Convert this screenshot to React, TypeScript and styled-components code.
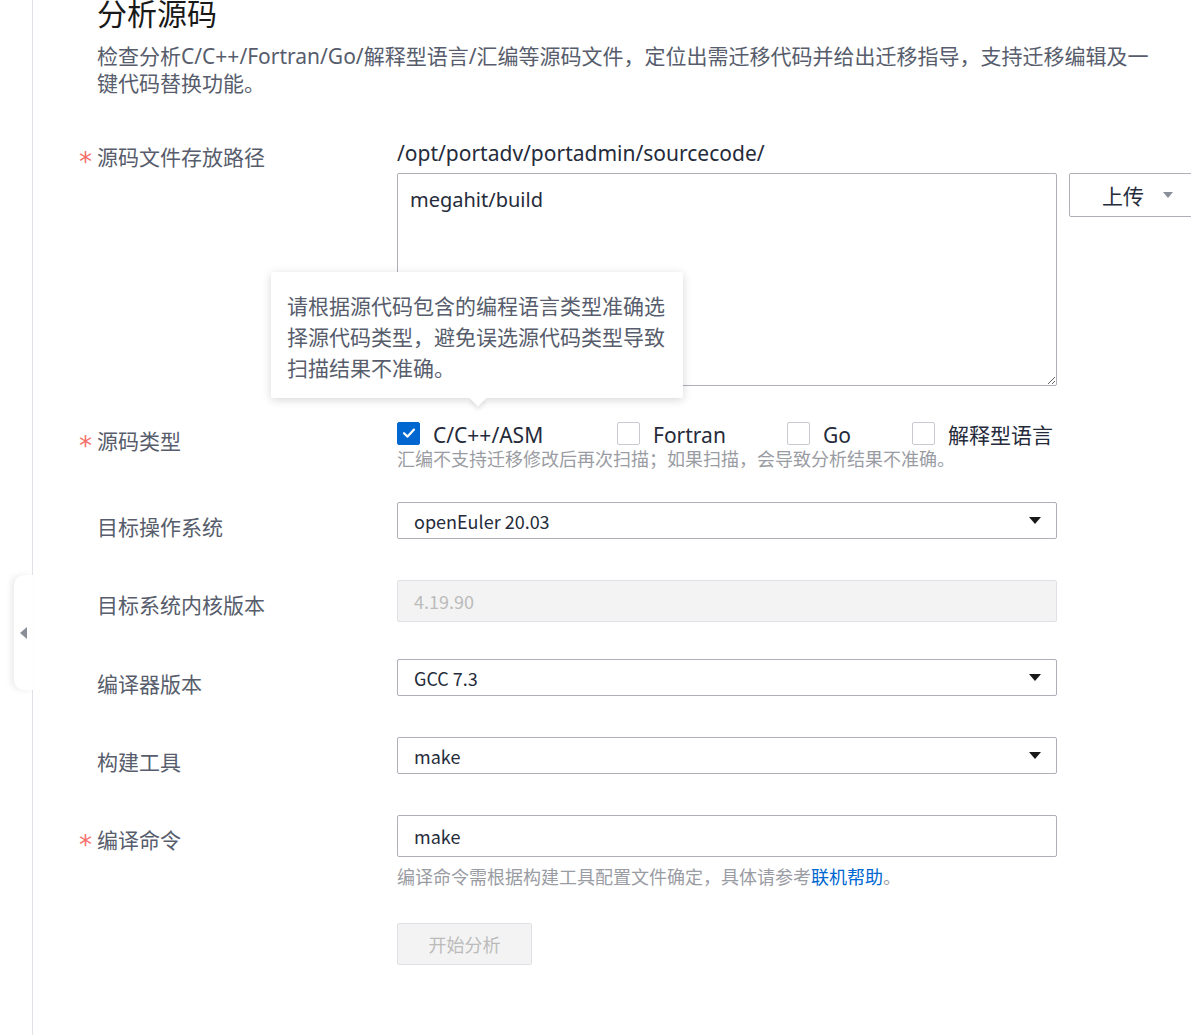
import styled, { createGlobalStyle } from "styled-components";

const GlobalStyle = createGlobalStyle`
  html, body {
    margin: 0;
    padding: 0;
    overflow: hidden;
    background: #ffffff;
  }
  body {
    font-family: "Noto Sans", "Noto Sans CJK SC", sans-serif;
    color: #252b3a;
  }
  * {
    box-sizing: border-box;
  }
`;

const cjk = `"Noto Sans CJK SC", "Noto Sans", sans-serif`;

const Page = styled.div`
  display: flex;
  min-height: 100vh;
  width: 100%;
`;

const Sidebar = styled.div`
  position: relative;
  flex: 0 0 33px;
  border-right: 1px solid #dfe1e6;
`;

const CollapseTab = styled.div`
  position: absolute;
  top: 575px;
  left: 14px;
  width: 19px;
  height: 115px;
  background: #ffffff;
  border-radius: 10px 0 0 10px;
  box-shadow: -3px 0 6px rgba(0, 0, 0, 0.08);
  display: flex;
  align-items: center;
  padding-left: 6px;
`;

const CollapseArrow = styled.span`
  width: 0;
  height: 0;
  border-top: 6px solid transparent;
  border-bottom: 6px solid transparent;
  border-right: 7px solid #8a8e99;
`;

const Main = styled.div`
  flex: 1;
  padding-left: 64px;
  min-width: 0;
`;

const Title = styled.h1`
  margin: -8px 0 0;
  font-family: ${cjk};
  font-size: 30px;
  line-height: 40px;
  font-weight: 400;
  color: #191919;
`;

const Description = styled.p`
  margin: 11px 0 0;
  width: 1062px;
  font-size: 21px;
  line-height: 27px;
  color: #575d6c;
`;

const Form = styled.div`
  margin-top: 42px;
  margin-left: -18px;
  display: flex;
  flex-direction: column;
`;

const Row = styled.div<{ $gap: number }>`
  display: flex;
  align-items: flex-start;
  margin-top: ${(p) => p.$gap}px;
`;

const LabelCell = styled.div<{ $pt: number }>`
  flex: 0 0 318px;
  display: flex;
  padding-top: ${(p) => p.$pt}px;
  font-family: ${cjk};
  font-size: 21px;
  line-height: 24px;
  color: #575d6c;
`;

const Star = styled.span<{ $show: boolean }>`
  flex: 0 0 18px;
  height: 24px;
  font-family: "DejaVu Sans", sans-serif;
  font-size: 26px;
  line-height: 24px;
  padding-top: 6px;
  color: #f66f6a;
  visibility: ${(p) => (p.$show ? "visible" : "hidden")};
`;

const Control = styled.div`
  position: relative;
  display: flex;
  flex-direction: column;
`;

const PathText = styled.div`
  font-size: 21px;
  line-height: 28px;
  color: #252b3a;
`;

const UploadLine = styled.div`
  display: flex;
  align-items: flex-start;
  gap: 12px;
  margin-top: 6px;
`;

const TextArea = styled.textarea`
  width: 660px;
  height: 213px;
  resize: vertical;
  border: 1px solid #adb0b8;
  border-radius: 2px;
  padding: 11px 12px;
  font-family: "Noto Sans", "Noto Sans CJK SC", sans-serif;
  font-size: 20px;
  line-height: 30px;
  color: #252b3a;
  outline: none;
`;

const UploadButton = styled.button`
  flex: 0 0 140px;
  height: 44px;
  border: 1px solid #adb0b8;
  border-radius: 2px;
  background: #ffffff;
  display: flex;
  align-items: center;
  padding-left: 32px;
  gap: 19px;
  font-family: ${cjk};
  font-size: 21px;
  color: #252b3a;
`;

const SmallCaret = styled.span`
  width: 0;
  height: 0;
  border-left: 5px solid transparent;
  border-right: 5px solid transparent;
  border-top: 6px solid #8a8e99;
`;

const Tooltip = styled.div`
  position: absolute;
  left: -126px;
  bottom: calc(100% + 23px);
  width: 412px;
  padding: 18px 16px 15px;
  background: #ffffff;
  border-radius: 2px;
  box-shadow: 0 2px 10px rgba(0, 0, 0, 0.16);
  font-family: ${cjk};
  font-size: 21px;
  line-height: 31px;
  color: #575d6c;
  &::after {
    content: "";
    position: absolute;
    left: 201px;
    bottom: -6px;
    width: 12px;
    height: 12px;
    background: #ffffff;
    transform: rotate(45deg);
    box-shadow: 3px 3px 4px rgba(0, 0, 0, 0.08);
  }
`;

const CheckGroup = styled.div`
  display: grid;
  grid-template-columns: 220px 170px 125px auto;
  align-items: center;
  height: 24px;
`;

const CheckItem = styled.label`
  display: flex;
  align-items: center;
  gap: 13px;
  font-size: 21px;
  line-height: 24px;
  color: #252b3a;
`;

const CheckText = styled.span`
  position: relative;
  top: 2px;
`;

const Box = styled.span<{ $checked: boolean }>`
  flex: 0 0 23px;
  width: 23px;
  height: 23px;
  border-radius: 2px;
  border: 1px solid ${(p) => (p.$checked ? "#0067d1" : "#c8cad0")};
  background: ${(p) => (p.$checked ? "#0067d1" : "#ffffff")};
  display: flex;
  align-items: center;
  justify-content: center;
`;

const Hint = styled.div<{ $mt: number }>`
  margin-top: ${(p) => p.$mt}px;
  font-family: ${cjk};
  font-size: 18px;
  line-height: 22px;
  color: #9a9ca3;
`;

const Link = styled.a`
  color: #0067d1;
  text-decoration: none;
`;

const Select = styled.div`
  width: 660px;
  height: 37px;
  border: 1px solid #adb0b8;
  border-radius: 2px;
  display: flex;
  align-items: center;
  justify-content: space-between;
  padding: 0 15px 0 16px;
  font-family: ${cjk};
  font-size: 18px;
  color: #252b3a;
`;

const Caret = styled.span`
  width: 0;
  height: 0;
  border-left: 6px solid transparent;
  border-right: 6px solid transparent;
  border-top: 7px solid #191919;
`;

const Input = styled.div<{ $disabled?: boolean }>`
  width: 660px;
  height: 42px;
  border: 1px solid ${(p) => (p.$disabled ? "#dfe1e6" : "#adb0b8")};
  border-radius: 2px;
  background: ${(p) => (p.$disabled ? "#f3f3f3" : "#ffffff")};
  display: flex;
  align-items: center;
  padding: 0 16px;
  font-family: ${cjk};
  font-size: 18px;
  color: ${(p) => (p.$disabled ? "#bbbbbb" : "#252b3a")};
`;

const SubmitButton = styled.button`
  width: 135px;
  height: 42px;
  border: 1px solid #dfe1e6;
  border-radius: 2px;
  background: #f3f3f3;
  font-family: ${cjk};
  font-size: 18px;
  color: #bbbbbb;
`;

const Check = () => (
  <svg width="16" height="16" viewBox="0 0 16 16">
    <path d="M3 8.2 L6.6 11.6 L13 4.6" fill="none" stroke="#fff" strokeWidth="2.2" strokeLinecap="round" strokeLinejoin="round" />
  </svg>
);

const languages = [
  { name: "C/C++/ASM", checked: true },
  { name: "Fortran", checked: false },
  { name: "Go", checked: false },
  { name: "解释型语言", checked: false },
];

const Label = ({ text, required, pt }: { text: string; required?: boolean; pt: number }) => (
  <LabelCell $pt={pt}>
    <Star $show={!!required}>*</Star>
    <span>{text}</span>
  </LabelCell>
);

const App = () => {
  return (
    <Page>
      <GlobalStyle />
      <Sidebar>
        <CollapseTab>
          <CollapseArrow />
        </CollapseTab>
      </Sidebar>
      <Main>
        <Title>分析源码</Title>
        <Description>
          检查分析C/C++/Fortran/Go/解释型语言/汇编等源码文件，定位出需迁移代码并给出迁移指导，支持迁移编辑及一键代码替换功能。
        </Description>
        <Form>
          <Row $gap={0}>
            <Label text="源码文件存放路径" required pt={5} />
            <Control>
              <PathText>/opt/portadv/portadmin/sourcecode/</PathText>
              <UploadLine>
                <TextArea defaultValue="megahit/build" />
                <UploadButton>
                  上传
                  <SmallCaret />
                </UploadButton>
              </UploadLine>
            </Control>
          </Row>

          <Row $gap={35}>
            <Label text="源码类型" required pt={7} />
            <Control>
              <Tooltip>
                请根据源代码包含的编程语言类型准确选择源代码类型，避免误选源代码类型导致扫描结果不准确。
              </Tooltip>
              <CheckGroup>
                {languages.map((lang) => (
                  <CheckItem key={lang.name}>
                    <Box $checked={lang.checked}>{lang.checked && <Check />}</Box>
                    <CheckText>{lang.name}</CheckText>
                  </CheckItem>
                ))}
              </CheckGroup>
              <Hint $mt={2}>汇编不支持迁移修改后再次扫描；如果扫描，会导致分析结果不准确。</Hint>
            </Control>
          </Row>

          <Row $gap={33}>
            <Label text="目标操作系统" pt={12} />
            <Select>
              openEuler 20.03
              <Caret />
            </Select>
          </Row>

          <Row $gap={41}>
            <Label text="目标系统内核版本" pt={12} />
            <Input $disabled>4.19.90</Input>
          </Row>

          <Row $gap={37}>
            <Label text="编译器版本" pt={12} />
            <Select>
              GCC 7.3
              <Caret />
            </Select>
          </Row>

          <Row $gap={41}>
            <Label text="构建工具" pt={12} />
            <Select>
              make
              <Caret />
            </Select>
          </Row>

          <Row $gap={41}>
            <Label text="编译命令" required pt={12} />
            <Control>
              <Input>make</Input>
              <Hint $mt={8}>
                编译命令需根据构建工具配置文件确定，具体请参考<Link href="#">联机帮助</Link>。
              </Hint>
            </Control>
          </Row>

          <Row $gap={36}>
            <LabelCell $pt={0} />
            <SubmitButton>开始分析</SubmitButton>
          </Row>
        </Form>
      </Main>
    </Page>
  );
};

export default App;
